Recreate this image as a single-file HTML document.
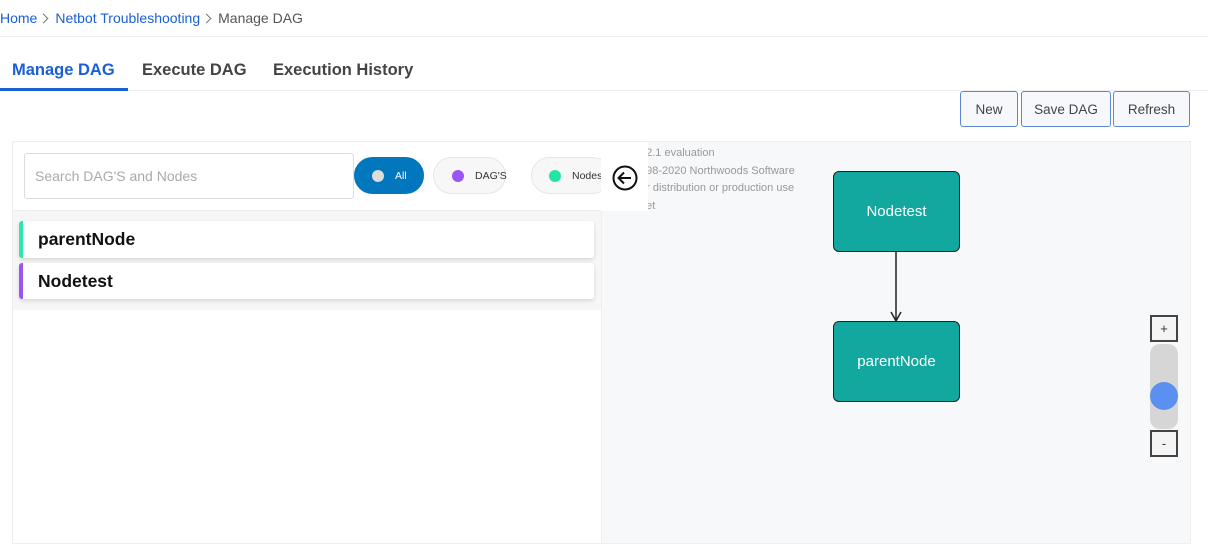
<!DOCTYPE html>
<html><head><style>
*{box-sizing:border-box;margin:0;padding:0}
body{width:1208px;height:544px;overflow:hidden;background:#fff;font-family:"Liberation Sans",sans-serif;position:relative}
.a{position:absolute}
.btn{position:absolute;top:91px;height:36px;border:1px solid #5b88d6;border-radius:3px;background:#f6f8fb;color:#444;font-size:13.5px;display:flex;align-items:center;justify-content:center}
.pill{position:absolute;top:157px;height:37px;border-radius:19px;border:1px solid #e6e6e6;background:#f7f7f7;font-size:10.5px;color:#333;display:flex;align-items:center;white-space:nowrap}
.dot{width:12px;height:12px;flex:0 0 12px;border-radius:50%;display:inline-block;margin-right:11px}
.item{position:absolute;left:19px;width:575px;background:#fff;border-radius:3px;box-shadow:0 2px 4px rgba(0,0,0,.12);font-size:17.5px;font-weight:bold;color:#111;padding-left:15px;display:flex;align-items:center}
.node{position:absolute;left:833px;width:127px;height:81px;background:#12a79f;border:1.5px solid #222;border-radius:6px;color:#fff;font-size:15px;display:flex;align-items:center;justify-content:center}
.zb{position:absolute;left:1150px;width:28px;height:27px;border:2px solid #444;background:#f4f4f4;font-size:13px;display:flex;align-items:center;justify-content:center;color:#333}
.chev{display:inline-block;width:7px;height:7px;border-top:1px solid #777;border-right:1px solid #777;transform:rotate(45deg);margin:0 8px 1px 3px}
</style></head><body>
<div class="a" style="left:0;top:36px;width:1208px;height:1px;background:#eee"></div>
<div class="a" style="left:0;top:10px;font-size:14px;white-space:nowrap"><span style="color:#1a5fd6">Home</span><span class="chev"></span><span style="color:#1a5fd6">Netbot Troubleshooting</span><span class="chev"></span><span style="color:#555">Manage DAG</span></div>
<div class="a" style="left:12px;top:61px;font-size:16.5px;font-weight:bold;color:#1a5fd6">Manage DAG</div>
<div class="a" style="left:142px;top:61px;font-size:16.5px;font-weight:bold;color:#444">Execute DAG</div>
<div class="a" style="left:273px;top:61px;font-size:16.5px;font-weight:bold;color:#444">Execution History</div>
<div class="a" style="left:0;top:90px;width:1208px;height:1px;background:#eee"></div>
<div class="a" style="left:0;top:88px;width:128px;height:3px;background:#1a5fd6"></div>
<div class="btn" style="left:960px;width:58px">New</div>
<div class="btn" style="left:1021px;width:90px">Save DAG</div>
<div class="btn" style="left:1113px;width:77px">Refresh</div>
<div class="a" style="left:12px;top:141px;width:590px;height:403px;border:1px solid #eee;background:#fff"></div>
<div class="a" style="left:13px;top:210px;width:588px;height:100px;background:#f6f6f6;border-top:1px solid #eee"></div>
<div class="a" style="left:24px;top:153px;width:330px;height:46px;border:1px solid #ddd;border-radius:3px;font-size:14px;color:#aaa;padding:14px 10px">Search DAG'S and Nodes</div>
<div class="pill" style="left:354px;width:70px;background:#0277bd;border-color:#0277bd;color:#fff;padding-left:17px"><span class="dot" style="background:#ddd"></span>All</div>
<div class="pill" style="left:433px;width:73px;padding-left:18px"><span class="dot" style="background:#9b55f0"></span>DAG'S</div>
<div class="pill" style="left:531px;width:80px;padding-left:17px;overflow:hidden"><span class="dot" style="background:#22e5a5"></span>Nodes</div>
<div class="item" style="top:221px;height:37px;border-left:4px solid #2ee8a8">parentNode</div>
<div class="item" style="top:263px;height:36px;border-left:4px solid #9b55f0">Nodetest</div>
<div class="a" style="left:601px;top:141px;width:590px;height:403px;background:#f7f8fa;border:1px solid #eee"></div>
<div class="a" style="left:640px;top:145px;font-size:11px;color:#999;line-height:17.5px;white-space:nowrap">&nbsp;&nbsp;2.1 evaluation<br>198-2020 Northwoods Software<br>or distribution or production use<br>het</div>
<div class="a" style="left:601px;top:142px;width:47px;height:69px;background:#fff"></div>
<svg class="a" style="left:611px;top:164px" width="28" height="28" viewBox="0 0 28 28"><circle cx="14" cy="14" r="11.5" fill="none" stroke="#111" stroke-width="2"/><path d="M20 14H8M13 8.5L7.5 14L13 19.5" fill="none" stroke="#111" stroke-width="2"/></svg>
<div class="node" style="top:171px">Nodetest</div>
<div class="node" style="top:321px">parentNode</div>
<svg class="a" style="left:886px;top:251px" width="20" height="72"><path d="M10 0V70M5 61L10 70L15 61" fill="none" stroke="#222" stroke-width="1.5"/></svg>
<div class="zb" style="top:315px">+</div>
<div class="a" style="left:1150px;top:344px;width:28px;height:85px;background:#d6d6d6;border-radius:10px"></div>
<div class="a" style="left:1150px;top:382px;width:28px;height:28px;background:#5b8ff0;border-radius:50%"></div>
<div class="zb" style="top:430px">-</div>
</body></html>
